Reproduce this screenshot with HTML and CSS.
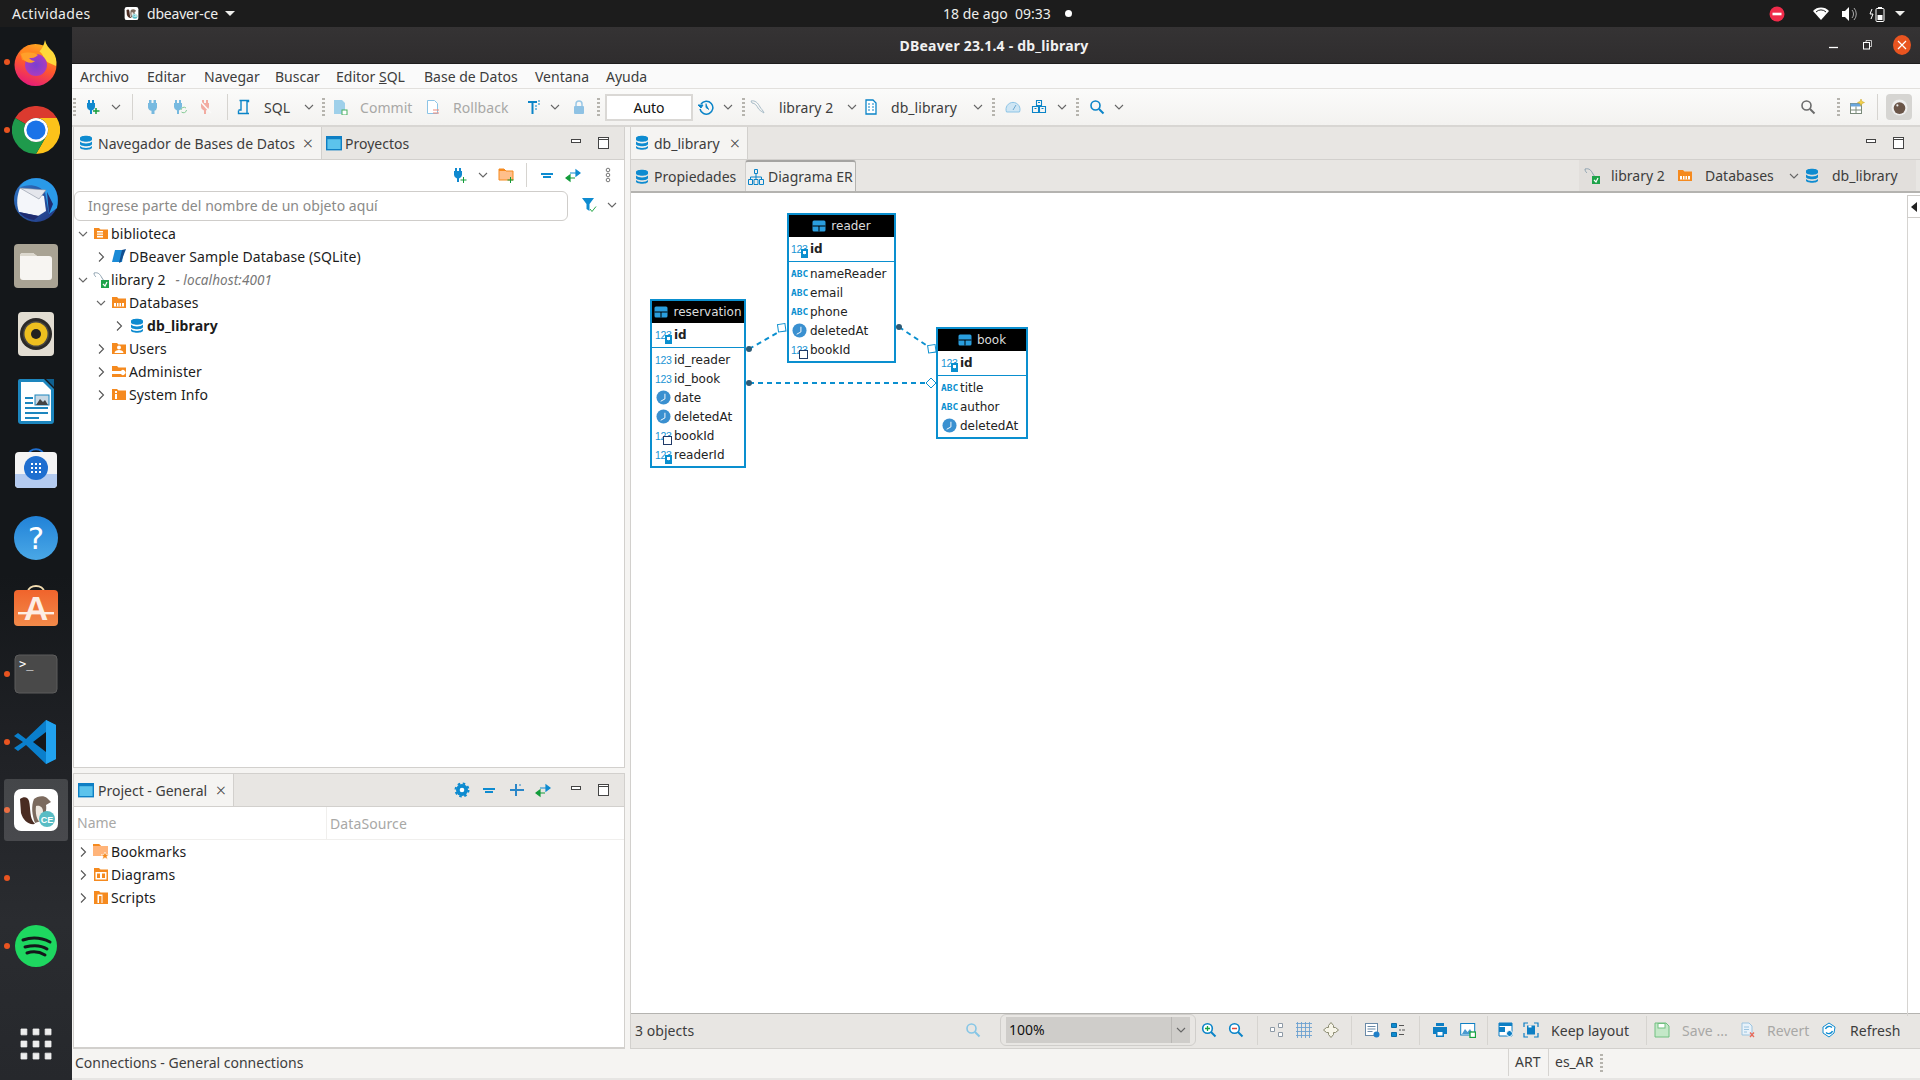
FILE: index.html
```html
<!DOCTYPE html>
<html lang="es">
<head>
<meta charset="utf-8">
<title>DBeaver 23.1.4 - db_library</title>
<link rel="stylesheet" href="styles.css">
</head>
<body>
<svg class="sprite" xmlns="http://www.w3.org/2000/svg">
<defs>
<linearGradient id="ffg" x1="0.7" y1="0" x2="0.3" y2="1"><stop offset="0" stop-color="#ffb01e"/><stop offset=".5" stop-color="#ff5a2c"/><stop offset="1" stop-color="#e5187c"/></linearGradient>
<radialGradient id="ffp"><stop offset="0" stop-color="#7a3fd0"/><stop offset="1" stop-color="#a83cc0"/></radialGradient>
<linearGradient id="tbg" x1="0" y1="0" x2="1" y2="1"><stop offset="0" stop-color="#2f78c8"/><stop offset="1" stop-color="#22357f"/></linearGradient>
<linearGradient id="hlp" x1="0" y1="0" x2="0" y2="1"><stop offset="0" stop-color="#2182d8"/><stop offset="1" stop-color="#4aa8e6"/></linearGradient>
<linearGradient id="bag" x1="0" y1="0" x2="0" y2="1"><stop offset="0" stop-color="#f0642c"/><stop offset="1" stop-color="#f28a4a"/></linearGradient>

<symbol id="firefox" viewBox="0 0 48 48">
<circle cx="23.500" cy="27" r="21" fill="url(#ffg)"/>
<path d="M33 2c1 5 4 8 8 12 3 4 4 9 3 14l-9-4-8-10c3-3 5-7 6-12z" fill="#ffd83a"/>
<path d="M8 15c3-4 5-6 9-8-1 3 0 5 2 7l8-1c4 3 6 8 5 13L10 22z" fill="#ff8a1e"/>
<circle cx="24" cy="27" r="11" fill="url(#ffp)"/>
<path d="M9 16c5-2 12-2 17 1-3 3-6 3-9 3 2 2 3 3 6 3-3 3-9 2-12-2z" fill="#ffa02a"/>
</symbol>
<symbol id="chrome" viewBox="0 0 48 48">
<path d="M3.200 12A24 24 0 0 1 44.800 12H24A12 12 0 0 0 13.600 18Z" fill="#db3a2f"/>
<path d="M44.800 12A24 24 0 0 1 24 48L34.400 30A12 12 0 0 0 24 12Z" fill="#fcc21a"/>
<path d="M3.200 12A24 24 0 0 0 24 48L34.400 30A12 12 0 0 1 13.600 18Z" fill="#1f9a4c"/>
<circle cx="24" cy="24" r="12" fill="#fff"/><circle cx="24" cy="24" r="9.600" fill="#1a73e8"/>
</symbol>
<symbol id="thunderbird" viewBox="0 0 48 48">
<circle cx="24" cy="26" r="22" fill="url(#tbg)"/>
<path d="M7 14C13 3 29 1 39 10c6 5 8 14 6 24l-8 6-4-22C27 11 16 9 7 14z" fill="#2a9ae8"/>
<path d="M8 14l24 8 2 15-8 5-19-4C4 30 5 22 8 14z" fill="#f4f6fa"/>
<path d="M8 14l26 2-7 9z" fill="#e4e6ec" stroke="#8890a0" stroke-width=".6"/>
<path d="M35 18l6 12-4 10zM7 38l20 4-5 4c-7-1-12-4-15-8z" fill="#1f2c70"/>
</symbol>
<symbol id="files" viewBox="0 0 48 48">
<rect x="2" y="2" width="44" height="44" rx="4" fill="#a9a394"/>
<path d="M8 14a3 3 0 0 1 3-3h10l4 3h12a3 3 0 0 1 3 3v18a3 3 0 0 1-3 3H11a3 3 0 0 1-3-3z" fill="#f7f5f2"/>
<path d="M8 14a3 3 0 0 1 3-3h10l4 3z" fill="#dcd8ce"/>
</symbol>
<symbol id="rhythmbox" viewBox="0 0 48 48">
<rect x="6" y="2" width="36" height="44" rx="4" fill="#e2ddd2"/>
<circle cx="24" cy="24" r="16" fill="#2c2a28"/><circle cx="24" cy="24" r="13" fill="#4a4844"/>
<circle cx="24" cy="24" r="11.500" fill="#eebf1f"/><circle cx="24" cy="24" r="5" fill="#242220"/>
</symbol>
<symbol id="writer" viewBox="0 0 48 48">
<path d="M8 1h24l10 10v32a3 3 0 0 1-3 3H9a3 3 0 0 1-3-3V3a2 2 0 0 1 2-2z" fill="#1d86be"/>
<path d="M9 4h22l8 8v31H9z" fill="#fff"/>
<path d="M34 1l8 0v8z" fill="#0f5f8e"/>
<path d="M13 19h8v2h-8zm0 5h8v2h-8zm0 5h23v2H13zm0 5h23v2H13zm0 5h14v2H13z" fill="#1d86be"/>
<rect x="23" y="17" width="14" height="10" fill="#c8d8e4" stroke="#1d86be"/><path d="M24 27l4-6 3 3 2-2 3 5z" fill="#444"/>
</symbol>
<symbol id="software" viewBox="0 0 48 48">
<path d="M16 10c0-9 16-9 16 0" fill="none" stroke="#1f6fd0" stroke-width="2"/>
<rect x="3" y="6" width="42" height="36" rx="4" fill="#f4f4f4"/>
<path d="M3 28h42v10a4 4 0 0 1-4 4H7a4 4 0 0 1-4-4z" fill="#b4cbf0"/>
<circle cx="24" cy="22" r="12" fill="#1f6fd0"/>
<path d="M19 17h2v2h-2zm4 0h2v2h-2zm4 0h2v2h-2zm-8 4h2v2h-2zm4 0h2v2h-2zm4 0h2v2h-2zm-8 4h2v2h-2zm4 0h2v2h-2zm4 0h2v2h-2z" fill="#fff"/>
</symbol>
<symbol id="help" viewBox="0 0 48 48">
<ellipse cx="24" cy="24" rx="22" ry="22" fill="url(#hlp)"/>
<text x="24" y="35" font-family="DejaVu Sans" font-size="31" text-anchor="middle" fill="#fff">?</text>
</symbol>
<symbol id="store" viewBox="0 0 48 48">
<path d="M16 10c0-8 16-8 16 0" fill="none" stroke="#f2dcb0" stroke-width="2"/>
<rect x="2" y="8" width="44" height="36" rx="4" fill="url(#bag)"/>
<text x="24" y="38" font-family="Liberation Sans" font-weight="700" font-size="34" text-anchor="middle" fill="#fdeee4">A</text>
<rect x="6" y="30" width="36" height="2.400" fill="#fdeee4"/>
</symbol>
<symbol id="terminal" viewBox="0 0 48 48">
<rect x="3" y="5" width="42" height="38" rx="4" fill="#494949" stroke="#5c5c5c"/>
<text x="7" y="18" font-family="DejaVu Sans Mono" font-size="12" fill="#fff">&gt;_</text>
</symbol>
<symbol id="vscode" viewBox="0 0 48 48">
<path d="M34 2l10 5v34l-10 5L14 27l-8 6-4-3 9-6-9-6 4-3 8 6z" fill="#0a7fcc"/>
<path d="M34 2l10 5v34l-10 5z" fill="#21a2ef"/>
<path d="M34 14L21 24l13 10z" fill="#15171a"/>
</symbol>
<symbol id="beaver" viewBox="0 0 48 48">
<rect x="2" y="3" width="44" height="42" rx="7" fill="#fff"/>
<path d="M8 13c4-3 8-2 9 2 2 8 0 17 6 23-7 1-12-4-14-11z" fill="#4a2c22"/>
<path d="M22 13c3-3 10-4 13-1l4 4-5 3c1 5-1 9-2 15l-9 3c-3-8-4-17-1-24z" fill="#7b6a5e"/>
<path d="M24 20c4-1 7 1 7 6 0 4-1 8-3 10-3-1-5-9-4-16z" fill="#eee8e0"/>
<circle cx="35" cy="33" r="8" fill="#58bcc4"/>
<text x="35" y="36.500" font-family="Liberation Sans" font-weight="700" font-size="9" text-anchor="middle" fill="#fff">CE</text>
</symbol>
<symbol id="spotify" viewBox="0 0 48 48">
<circle cx="24" cy="24" r="21" fill="#1ed760"/>
<path d="M11 18c9-3 19-2 27 2M13 25c8-2 16-2 22 2M15 31c6-2 13-1 18 2" fill="none" stroke="#14171a" stroke-width="3" stroke-linecap="round"/>
</symbol>
<symbol id="apps" viewBox="0 0 48 48">
<path d="M6 6h7v7H6zm14.500 0h7v7h-7zM35 6h7v7h-7zM6 20.500h7v7H6zm14.500 0h7v7h-7zm14.500 0h7v7h-7zM6 35h7v7H6zm14.500 0h7v7h-7zM35 35h7v7h-7z" fill="#eee" stroke="#eee" stroke-linejoin="round"/>
</symbol>

<symbol id="plug" viewBox="0 0 16 16"><path d="M4 1h2.500v3h2V1H11v3h1v4.500a4 4 0 0 1-2.500 3.300V15h-3v-3.200A4 4 0 0 1 3 8.500V4h1z" fill="#1089cf"/></symbol>
<symbol id="plugadd" viewBox="0 0 16 16"><path d="M3 1h2v3h2V1h2v3h1v4a4 4 0 0 1-3 3.500V15H5v-3.500A4 4 0 0 1 2 8V4h1z" fill="#1089cf"/><path d="M11 9v6M8 12h6.500" stroke="#139c3b" stroke-width="1.500"/></symbol>
<symbol id="plugre" viewBox="0 0 16 16"><path d="M3 1h2v3h2V1h2v3h1v4a4 4 0 0 1-3 3.500V15H5v-3.500A4 4 0 0 1 2 8V4h1z" fill="#1089cf"/><path d="M9 11a3 3 0 0 1 5-2M14.500 11a3 3 0 0 1-5 2" stroke="#2aa84a" fill="none"/></symbol>
<symbol id="plugx" viewBox="0 0 16 16"><path d="M4 1h2v3h2V1h2v3h1v4a4 4 0 0 1-3 3.500V15H6v-3.500A4 4 0 0 1 3 8V4h1z" fill="#ef6f5e"/><path d="M2 2l11 12" stroke="#fff" stroke-width="1.500"/></symbol>
<symbol id="sql" viewBox="0 0 16 16"><path d="M3.500 1.500h9v1h-1.500v12H2.500v-3M5 2v9H2.500M11 14.500h2" fill="none" stroke="#0a84c8" stroke-width="1.400"/></symbol>
<symbol id="commit" viewBox="0 0 16 16"><path d="M2 1h8l3 3v11H2z" fill="#9fd0ea"/><rect x="10" y="11" width="5" height="5" fill="#fff" stroke="#48b060"/></symbol>
<symbol id="rollback" viewBox="0 0 16 16"><path d="M2.500 1.500h7l3 3v10h-10z" fill="#fff" stroke="#8cc4e6"/><path d="M8 11h6M8 14h6" stroke="#f08a7a"/></symbol>
<symbol id="txmode" viewBox="0 0 16 16"><path d="M2 2h9v2H7.500v11h-2V4H2z" fill="#0a84c8"/><path d="M12 2h2M12 5h2M9 7h2M9 10h2" stroke="#0a84c8"/></symbol>
<symbol id="lock" viewBox="0 0 16 16"><path d="M5 7V5a3 3 0 0 1 6 0v2" fill="none" stroke="#9ac8e6" stroke-width="1.500"/><rect x="3" y="7" width="10" height="8" rx="1" fill="#8fc2e4"/></symbol>
<symbol id="history" viewBox="0 0 16 16"><path d="M3 5a6.500 6.500 0 1 1-1 5" fill="none" stroke="#0a84c8" stroke-width="1.500"/><path d="M0 6h5L3 9zM8 4.500V8.500l3 2" fill="#0a84c8" stroke="#0a84c8"/></symbol>
<symbol id="mysql" viewBox="0 0 16 16"><path d="M1 2c4-1 7 2 9 6 1 2 3 3 4 6-3-2-5-3-6-5S5 4 2 4z" fill="none" stroke="#a8bcc8"/></symbol>
<symbol id="mysqlok" viewBox="0 0 16 16"><path d="M1 1c4-1 6 1 8 5l2 3" fill="none" stroke="#8ea2b0"/><path d="M1 1c0 2 1 3 2 4" fill="none" stroke="#8ea2b0"/><rect x="8" y="8" width="8" height="8" fill="#1ea34a"/><path d="M10 12l2 2 2-4" fill="none" stroke="#fff" stroke-width="1.200"/></symbol>
<symbol id="dbdoc" viewBox="0 0 16 16"><path d="M3 1h7l3 3v11H3z" fill="#fff" stroke="#0a84c8" stroke-width="1.300"/><path d="M5 5h2M9 5h2M5 8h2M9 8h2M5 11h2M9 11h2" stroke="#0a84c8"/></symbol>
<symbol id="gauge" viewBox="0 0 16 16"><path d="M1.500 13a7 7 0 1 1 13 0z" fill="#cfe6f4" stroke="#8cc4e6"/><path d="M8 11l3-5" stroke="#6ca8d0"/></symbol>
<symbol id="boxes" viewBox="0 0 16 16"><path d="M5.500 1.500h5v5h-5zM1.500 7.500h6v6h-6zM8.500 7.500h6v6h-6zM7 3.500h2M3.500 9.500h2M10.500 9.500h2" fill="none" stroke="#0a84c8" stroke-width="1.100"/></symbol>
<symbol id="search" viewBox="0 0 16 16"><circle cx="6.500" cy="6.500" r="4.500" fill="none" stroke="#0a84c8" stroke-width="1.600"/><path d="M10 10l4.500 4.500" stroke="#0a84c8" stroke-width="2"/></symbol>
<symbol id="searchg" viewBox="0 0 16 16"><circle cx="6.500" cy="6.500" r="4.500" fill="none" stroke="#6b6b6b" stroke-width="1.600"/><path d="M10 10l4.500 4.500" stroke="#6b6b6b" stroke-width="2"/></symbol>
<symbol id="searchl" viewBox="0 0 16 16"><circle cx="6.500" cy="6.500" r="4.500" fill="none" stroke="#86c6e6" stroke-width="1.600"/><path d="M10 10l4.500 4.500" stroke="#86c6e6" stroke-width="2"/></symbol>
<symbol id="zoomin" viewBox="0 0 16 16"><circle cx="6.500" cy="6.500" r="4.800" fill="#fff" stroke="#0a84c8" stroke-width="1.600"/><path d="M10 10l4.500 4.500" stroke="#0a84c8" stroke-width="2"/><path d="M4 6.500h5M6.500 4v5" stroke="#16a340" stroke-width="1.300"/></symbol>
<symbol id="zoomout" viewBox="0 0 16 16"><circle cx="6.500" cy="6.500" r="4.800" fill="#fff" stroke="#0a84c8" stroke-width="1.600"/><path d="M10 10l4.500 4.500" stroke="#0a84c8" stroke-width="2"/><path d="M4 6.500h5" stroke="#e0483a" stroke-width="1.500"/></symbol>
<symbol id="newtable" viewBox="0 0 16 16"><rect x="1.500" y="4.500" width="11" height="10" fill="#fff" stroke="#7a8a7a"/><path d="M1.500 7.500h11v-3h-11z" fill="#6aa6dc"/><path d="M7 7.500v7M1.500 11h11" stroke="#7a8a7a"/><path d="M12 0l1 2.500 2.500 1-2.500 1L12 7l-1-2.500-2.500-1 2.500-1z" fill="#f4d24a" stroke="#c8a020" stroke-width=".5"/></symbol>
<symbol id="min" viewBox="0 0 14 14"><rect x="1.500" y="3.500" width="9" height="3" fill="#fff" stroke="#444"/></symbol>
<symbol id="max" viewBox="0 0 14 14"><rect x="1.500" y="1.500" width="10" height="11" fill="#fff" stroke="#444"/><path d="M1.500 3.500h10" stroke="#444"/></symbol>
<symbol id="db" viewBox="0 0 16 16"><path d="M2 3c0-3 12-3 12 0v1.500c0 3-12 3-12 0zM2 6.500c2 2.500 10 2.500 12 0V9c0 3-12 3-12 0zM2 11c2 2.500 10 2.500 12 0v1.500c0 3-12 3-12 0z" fill="#0e8bd0"/></symbol>
<symbol id="proj" viewBox="0 0 16 16"><rect x=".7" y="1.700" width="14.600" height="13" fill="#5cc3ec" stroke="#0e7fc4" stroke-width="1.400"/><rect x=".7" y="1.700" width="14.600" height="2.500" fill="#0e7fc4"/></symbol>
<symbol id="er" viewBox="0 0 16 16"><path d="M6.500.5h3v4h-3zM.5 10.500h4v5h-4zM6 10.500h4v5H6zM11.500 10.500h4v5h-4zM8 4.500V8M2.500 10.500V8h11v2.500M8 8v2.500" fill="none" stroke="#0a84c8"/></symbol>
<symbol id="plugplus" viewBox="0 0 16 16"><path d="M3 1h2v3h2V1h2v3h1v4a4 4 0 0 1-3 3.500V15H5v-3.500A4 4 0 0 1 2 8V4h1z" fill="#1089cf"/><path d="M11.500 10v6M8.500 13h6" stroke="#139c3b"/></symbol>
<symbol id="folderadd" viewBox="0 0 16 16"><path d="M1 2h5l2 2h7v9H1z" fill="#ffbf8a" stroke="#f58a1f"/><path d="M1 2h5l2 2H1z" fill="#f58a1f"/><path d="M12.500 10v6M9.500 13h6" stroke="#139c3b"/></symbol>
<symbol id="collapse" viewBox="0 0 16 16"><path d="M2 7h12M4 10h8" stroke="#0e8bd0" stroke-width="1.800"/></symbol>
<symbol id="expand" viewBox="0 0 16 16"><path d="M1 8h14M7 2v12" stroke="#2a86c8" stroke-width="2"/><path d="M10 3h2" stroke="#2a86c8"/></symbol>
<symbol id="link" viewBox="0 0 16 16"><path d="M5 6h10M15 6l-4-3v6z" stroke="#0e8bd0" fill="#0e8bd0" stroke-width="1.200"/><path d="M1 11h9M1 11l4-3v6z" stroke="#139c3b" fill="#139c3b" stroke-width="1.200"/></symbol>
<symbol id="gear" viewBox="0 0 16 16"><circle cx="8" cy="8" r="6" fill="#0e8bd0"/><circle cx="8" cy="8" r="2.300" fill="#fff"/><circle cx="8" cy="8" r="6.500" fill="none" stroke="#0e8bd0" stroke-width="2" stroke-dasharray="2.500 2.600"/></symbol>
<symbol id="dots" viewBox="0 0 16 16"><circle cx="8" cy="3" r="1.800" fill="#fff" stroke="#777"/><circle cx="8" cy="8" r="1.800" fill="#fff" stroke="#777"/><circle cx="8" cy="13" r="1.800" fill="#fff" stroke="#777"/></symbol>
<symbol id="filter" viewBox="0 0 16 16"><path d="M1 1h12L8.500 7v7l-3-2V7z" fill="#0e8bd0"/><path d="M9 12l2 2.500 4-5" fill="none" stroke="#2aa84a"/></symbol>
<symbol id="f-conn" viewBox="0 0 16 16"><path d="M1 2h5l1.500 1.500H15V13H1z" fill="#f58a1f"/><rect x="4" y="5" width="6" height="6.500" fill="#fff"/><path d="M4 7h6M4 9.300h6" stroke="#f58a1f"/></symbol>
<symbol id="f-sample" viewBox="0 0 16 16"><path d="M4 1h9L11 13H1z" fill="#1a8ad6"/><path d="M11 1l4-1-5 13-2 1z" fill="#124f90"/></symbol>
<symbol id="f-dbs" viewBox="0 0 16 16"><path d="M1 2h5l1.500 1.500H15V13H1z" fill="#f58a1f"/><path d="M3 6h10v5.500H3z" fill="#fff"/><path d="M3 6h10v1.500H3zM5.500 7v4.500M8 7v4.500M10.500 7v4.500" fill="#f58a1f" stroke="#f58a1f"/></symbol>
<symbol id="f-users" viewBox="0 0 16 16"><path d="M1 2h5l1.500 1.500H15V13H1z" fill="#f58a1f"/><circle cx="8" cy="6.500" r="2" fill="#fff"/><path d="M3.500 12c0-4 9-4 9 0z" fill="#fff"/></symbol>
<symbol id="f-admin" viewBox="0 0 16 16"><path d="M1 2h5l1.500 1.500H15V13H1z" fill="#f58a1f"/><path d="M1 7h9a2.500 2.500 0 1 1 0 3H1z" fill="#fff"/></symbol>
<symbol id="f-info" viewBox="0 0 16 16"><path d="M1 2h5l1.500 1.500H15V13H1z" fill="#f58a1f"/><path d="M4 4h2v2H4zm0 3h2v5H4z" fill="#fff"/></symbol>
<symbol id="f-book" viewBox="0 0 16 16"><path d="M0 0h6l2 2h7v10H0z" fill="#ffb47a"/><path d="M0 0h6l2 2H0z" fill="#f58a1f"/><path d="M12 8l1.200 2.600H16l-2.200 1.800.8 3-2.600-1.700-2.600 1.700.8-3L8 10.600h2.800z" fill="#f58a1f" stroke="#fff" stroke-width=".6"/></symbol>
<symbol id="f-diag" viewBox="0 0 16 16"><path d="M1 1h5l1.500 1.500H15V14H1z" fill="#f58a1f"/><path d="M2.500 5h11v7.500h-11z" fill="#fff"/><path d="M4 6.500h3v4.500H4zM9 6.500h3v4.500H9z" fill="#f58a1f"/></symbol>
<symbol id="f-script" viewBox="0 0 16 16"><path d="M1 1h5l1.500 1.500H15V14H1z" fill="#f58a1f"/><path d="M4.500 4.500h5V13h-5z" fill="#fff"/><path d="M6 6h2.500v7H6z" fill="#f58a1f"/></symbol>
<symbol id="t-layout" viewBox="0 0 16 16"><path d="M1.500 5.500h4v4h-4zM9.500 1.500h4v4h-4zM9.500 10.500h4v4h-4z" fill="#fff" stroke="#8e9aa6"/></symbol>
<symbol id="t-grid" viewBox="0 0 16 16"><path d="M1.500 0v16M5.500 0v16M9.500 0v16M13.500 0v16M0 1.500h16M0 5.500h16M0 9.500h16M0 13.500h16" stroke="#6ca0d0" stroke-width=".9"/></symbol>
<symbol id="t-move" viewBox="0 0 16 16"><path d="M8 .5l2.500 3v2h2l3 2.500-3 2.500h-2v2L8 15.500l-2.500-3v-2h-2L.5 8l3-2.500h2v-2z" fill="#f6f4e8" stroke="#8a8a70"/></symbol>
<symbol id="t-note" viewBox="0 0 16 16"><rect x="1.500" y="1.500" width="12" height="12" fill="#fff" stroke="#6a8aa8"/><path d="M3.500 4.500h8M3.500 7h8M3.500 9.500h5" stroke="#6a8aa8"/><circle cx="12.500" cy="12.500" r="3" fill="#1f7fc8"/></symbol>
<symbol id="t-tree" viewBox="0 0 16 16"><path d="M1.500 1.500h5v4h-5zM1.500 10.500h5v4h-5z" fill="#0e8bd0" stroke="#0e6ea8"/><path d="M9 3.500h5M9 8h2M12 8h3M9 12.500h5" stroke="#555"/></symbol>
<symbol id="t-print" viewBox="0 0 16 16"><path d="M4 1h8v3H4zM1 5h14v7h-3v3H4v-3H1z" fill="#0e7fc4"/><path d="M5.500 10h5v3.500h-5z" fill="#fff"/></symbol>
<symbol id="t-img" viewBox="0 0 16 16"><rect x=".7" y="1.500" width="14" height="11.500" fill="#fff" stroke="#0e7fc4"/><path d="M2 12l3-5 2.500 3L10 7l3 5z" fill="#4a9ad0"/><rect x="10" y="10" width="5.500" height="5.500" fill="#fff" stroke="#16a340" stroke-width="1.300"/></symbol>
<symbol id="t-cfg" viewBox="0 0 16 16"><path d="M1 1h13v13H1z" fill="#fff" stroke="#0e7fc4"/><path d="M1 1h13v3H1zM1 5h6v5H1z" fill="#0e7fc4"/><circle cx="11.500" cy="11.500" r="3" fill="#0e7fc4" stroke="#fff"/></symbol>
<symbol id="t-fit" viewBox="0 0 16 16"><path d="M1 5V1h4M11 1h4v4M15 11v4h-4M5 15H1v-4" fill="none" stroke="#0e7fc4" stroke-width="1.200"/><rect x="4" y="3.500" width="8" height="9" fill="#0e7fc4"/><rect x="5.500" y="3.500" width="3" height="2" fill="#fff"/></symbol>
<symbol id="t-save" viewBox="0 0 16 16"><path d="M1 1h11l3 3v11H1z" fill="#c4e8c8" stroke="#70c080"/><rect x="4" y="1.500" width="7" height="4.500" fill="#fff" stroke="#70c080"/></symbol>
<symbol id="t-revert" viewBox="0 0 16 16"><path d="M2 1h7l3 3v9H2z" fill="#e8f2fa" stroke="#9cc4e0"/><path d="M4 5h5M4 7.500h5M4 10h3" stroke="#9cc4e0"/><path d="M10 10.500l4 4.500M14 10.500l-4 4.500" stroke="#e86a5a" stroke-width="1.300"/></symbol>
<symbol id="t-refresh" viewBox="0 0 16 16"><path d="M8 1L14 5l-1 6-5 4-6-4V5z" fill="#fff" stroke="#0e8bd0"/><path d="M4.500 7a4 4 0 0 1 6.500-1.500M11.500 9a4 4 0 0 1-6.500 1.500" fill="none" stroke="#0e8bd0" stroke-width="1.400"/></symbol>
<symbol id="chev-d" viewBox="0 0 12 12"><path d="M2 4l4 4 4-4" fill="none" stroke="#666" stroke-width="1.100"/></symbol>
<symbol id="chev-r" viewBox="0 0 12 12"><path d="M4 1.500L8.500 6 4 10.500" fill="none" stroke="#555" stroke-width="1.100"/></symbol>
<symbol id="erhead" viewBox="0 0 14 12"><rect x=".5" y=".5" width="13" height="11" rx="1.500" fill="#2a9ede"/><path d="M.5 6h13M7 6v5.500" stroke="#000"/></symbol>
<symbol id="clock" viewBox="0 0 16 16"><circle cx="8" cy="8" r="7.500" fill="#3a90d0"/><path d="M9.500 4v5.500L5 12" fill="none" stroke="#fff"/></symbol>
</defs>
</svg>

<div class="screen">
  <header class="topbar">
    <span class="top-act">Actividades</span>
    <svg class="top-appicon" viewBox="0 0 48 48"><use href="#beaver"/></svg>
    <span class="top-app">dbeaver-ce</span>
    <span class="tri"></span>
    <div class="top-clock"><span>18 de ago&nbsp; 09:33</span><i class="top-dot"></i></div>
    <div class="top-tray">
      <svg class="tray-ic" viewBox="0 0 16 16"><circle cx="8" cy="8" r="7.500" fill="#ef2b4a"/><rect x="3.500" y="6.700" width="9" height="2.600" fill="#fff"/></svg>
      <svg class="tray-ic tray-wifi" viewBox="0 0 16 16"><path d="M0 5a11 11 0 0 1 16 0L8 14z" fill="#fff"/><path d="M3 6a7 7 0 0 1 10 0" stroke="#1c1c1c" fill="none"/></svg>
      <svg class="tray-ic tray-next" viewBox="0 0 16 16"><path d="M1 5h3l4-4v14l-4-4H1z" fill="#fff"/><path d="M11 4a6 6 0 0 1 0 8M13 2a9 9 0 0 1 0 12" stroke="#aaa" fill="none"/></svg>
      <svg class="tray-ic tray-next" viewBox="0 0 16 16"><rect x="7" y="2.500" width="8" height="13" rx="1" fill="none" stroke="#fff"/><rect x="9" y="1" width="4" height="1.500" fill="#fff"/><rect x="8.500" y="9" width="5" height="5" fill="#fff"/><path d="M3 3L1 8h3l-2 5" fill="none" stroke="#fff"/></svg>
      <span class="tri tray-tri"></span>
    </div>
  </header>

  <div class="desk">
    <nav class="dock">
      <div class="dock-item run"><svg class="dock-ic" viewBox="0 0 48 48"><use href="#firefox"/></svg></div>
      <div class="dock-item run"><svg class="dock-ic" viewBox="0 0 48 48"><use href="#chrome"/></svg></div>
      <div class="dock-item"><svg class="dock-ic" viewBox="0 0 48 48"><use href="#thunderbird"/></svg></div>
      <div class="dock-item"><svg class="dock-ic" viewBox="0 0 48 48"><use href="#files"/></svg></div>
      <div class="dock-item"><svg class="dock-ic" viewBox="0 0 48 48"><use href="#rhythmbox"/></svg></div>
      <div class="dock-item"><svg class="dock-ic" viewBox="0 0 48 48"><use href="#writer"/></svg></div>
      <div class="dock-item"><svg class="dock-ic" viewBox="0 0 48 48"><use href="#software"/></svg></div>
      <div class="dock-item"><svg class="dock-ic" viewBox="0 0 48 48"><use href="#help"/></svg></div>
      <div class="dock-item"><svg class="dock-ic" viewBox="0 0 48 48"><use href="#store"/></svg></div>
      <div class="dock-item run"><svg class="dock-ic" viewBox="0 0 48 48"><use href="#terminal"/></svg></div>
      <div class="dock-item run"><svg class="dock-ic" viewBox="0 0 48 48"><use href="#vscode"/></svg></div>
      <div class="dock-item run active"><svg class="dock-ic" viewBox="0 0 48 48"><use href="#beaver"/></svg></div>
      <div class="dock-item run"></div>
      <div class="dock-item run"><svg class="dock-ic" viewBox="0 0 48 48"><use href="#spotify"/></svg></div>
      <div class="dock-apps"><svg class="dock-appsic" viewBox="0 0 48 48"><use href="#apps"/></svg></div>
    </nav>

    <main class="window">
      <div class="titlebar">
        <span class="title">DBeaver 23.1.4 - db_library</span>
        <div class="wincontrols">
          <svg class="wc" viewBox="0 0 12 12"><path d="M1 8.500h9" stroke="#fff" stroke-width="1.300"/></svg>
          <svg class="wc wc-gap" viewBox="0 0 12 12"><rect x="2.500" y="3.500" width="6" height="6.500" fill="none" stroke="#fff"/><path d="M5 3.500V1.500h5.500v6H9" fill="none" stroke="#fff" stroke-width=".7"/></svg>
          <span class="wc-close"><svg viewBox="0 0 12 12" class="wc-x"><path d="M2 2l8 8M10 2l-8 8" stroke="#fff" stroke-width="1.200"/></svg></span>
        </div>
      </div>

      <div class="menubar">
        <span class="mi mi1">Archivo</span><span class="mi mi2">Editar</span><span class="mi mi3">Navegar</span><span class="mi mi4">Buscar</span><span class="mi mi5">Editor <u>S</u>QL</span><span class="mi mi6">Base de Datos</span><span class="mi mi7">Ventana</span><span class="mi mi8">Ayuda</span>
      </div>

      <div class="toolbar">
        <i class="handle"></i>
        <svg class="ic m8"><use href="#plugadd"/></svg>
        <svg class="cv m8"><use href="#chev-d"/></svg>
        <i class="tsep m10"></i>
        <svg class="ic m11 dim"><use href="#plug"/></svg>
        <svg class="ic m9 dim"><use href="#plugre"/></svg>
        <svg class="ic m8 dim"><use href="#plugx"/></svg>
        <i class="tsep m12"></i>
        <svg class="ic m7"><use href="#sql"/></svg>
        <span class="tx m11 w27">SQL</span>
        <svg class="cv m12"><use href="#chev-d"/></svg>
        <i class="handle m7"></i>
        <svg class="ic m6"><use href="#commit"/></svg>
        <span class="tx off m11 w54">Commit</span>
        <svg class="ic m10"><use href="#rollback"/></svg>
        <span class="tx off m11 w57">Rollback</span>
        <svg class="ic m15"><use href="#txmode"/></svg>
        <svg class="cv m6"><use href="#chev-d"/></svg>
        <svg class="ic m9"><use href="#lock"/></svg>
        <i class="handle m9"></i>
        <span class="autobox m5">Auto</span>
        <svg class="ic m4"><use href="#history"/></svg>
        <svg class="cv m7"><use href="#chev-d"/></svg>
        <i class="handle m8"></i>
        <svg class="ic m4"><use href="#mysql"/></svg>
        <span class="tx m12 w55">library 2</span>
        <svg class="cv m12"><use href="#chev-d"/></svg>
        <svg class="ic m4"><use href="#dbdoc"/></svg>
        <span class="tx m11 w69">db_library</span>
        <svg class="cv m12"><use href="#chev-d"/></svg>
        <i class="handle m8"></i>
        <svg class="ic m9"><use href="#gauge"/></svg>
        <svg class="ic m8"><use href="#boxes"/></svg>
        <svg class="cv m8"><use href="#chev-d"/></svg>
        <i class="handle m8"></i>
        <svg class="ic m9"><use href="#search"/></svg>
        <svg class="cv m7"><use href="#chev-d"/></svg>
        <div class="toolbar-end">
          <svg class="ic"><use href="#searchg"/></svg>
          <i class="handle m20"></i>
          <svg class="ic m8"><use href="#newtable"/></svg>
          <i class="tsep m11"></i>
          <span class="persp m8"><svg viewBox="0 0 16 16" class="persp-ic"><circle cx="8" cy="8" r="7.500" fill="#eee"/><circle cx="8" cy="8.500" r="5.500" fill="#6a5548"/><circle cx="6" cy="6" r="1" fill="#eee"/></svg></span>
        </div>
      </div>

      <div class="workspace">
        <div class="leftcol">
          <section class="pane pane-nav">
            <div class="tabbar">
              <div class="tab tab-nav"><svg class="ic"><use href="#db"/></svg><span class="tabtxt">Navegador de Bases de Datos</span><span class="x">×</span></div>
              <div class="tab tab-plain"><svg class="ic"><use href="#proj"/></svg><span class="tabtxt">Proyectos</span></div>
              <div class="pane-btns"><svg class="mm" viewBox="0 0 14 14"><use href="#min"/></svg><svg class="mm" viewBox="0 0 14 14"><use href="#max"/></svg></div>
            </div>
            <div class="nav-tools">
              <svg class="ic"><use href="#plugplus"/></svg>
              <svg class="cv m8"><use href="#chev-d"/></svg>
              <svg class="ic m8"><use href="#folderadd"/></svg>
              <i class="tsep m11"></i>
              <svg class="ic m11"><use href="#collapse"/></svg>
              <svg class="ic m8"><use href="#link"/></svg>
              <svg class="ic m17"><use href="#dots"/></svg>
            </div>
            <div class="searchrow">
              <div class="searchbox">Ingrese parte del nombre de un objeto aquí</div>
              <svg class="ic m12"><use href="#filter"/></svg>
              <svg class="cv m8"><use href="#chev-d"/></svg>
            </div>
            <ul class="tree">
              <li class="node l0"><svg class="tw"><use href="#chev-d"/></svg><svg class="ic"><use href="#f-conn"/></svg><span>biblioteca</span></li>
              <li class="node l1"><svg class="tw"><use href="#chev-r"/></svg><svg class="ic"><use href="#f-sample"/></svg><span>DBeaver Sample Database (SQLite)</span></li>
              <li class="node l0"><svg class="tw"><use href="#chev-d"/></svg><svg class="ic"><use href="#mysqlok"/></svg><span>library 2 <em class="host">- localhost:4001</em></span></li>
              <li class="node l1"><svg class="tw"><use href="#chev-d"/></svg><svg class="ic"><use href="#f-dbs"/></svg><span>Databases</span></li>
              <li class="node l2"><svg class="tw"><use href="#chev-r"/></svg><svg class="ic"><use href="#db"/></svg><b>db_library</b></li>
              <li class="node l1"><svg class="tw"><use href="#chev-r"/></svg><svg class="ic"><use href="#f-users"/></svg><span>Users</span></li>
              <li class="node l1"><svg class="tw"><use href="#chev-r"/></svg><svg class="ic"><use href="#f-admin"/></svg><span>Administer</span></li>
              <li class="node l1"><svg class="tw"><use href="#chev-r"/></svg><svg class="ic"><use href="#f-info"/></svg><span>System Info</span></li>
            </ul>
          </section>

          <section class="pane pane-proj">
            <div class="tabbar">
              <div class="tab tab-proj"><svg class="ic"><use href="#proj"/></svg><span class="tabtxt">Project - General</span><span class="x">×</span></div>
              <div class="pane-btns">
                <svg class="ic"><use href="#gear"/></svg>
                <svg class="ic m9"><use href="#collapse"/></svg>
                <svg class="ic m10"><use href="#expand"/></svg>
                <svg class="ic m8"><use href="#link"/></svg>
                <svg class="mm m18" viewBox="0 0 14 14"><use href="#min"/></svg><svg class="mm" viewBox="0 0 14 14"><use href="#max"/></svg>
              </div>
            </div>
            <div class="colhead"><span class="col-name">Name</span><span class="col-ds">DataSource</span></div>
            <ul class="tree">
              <li class="node l0"><svg class="tw"><use href="#chev-r"/></svg><svg class="ic"><use href="#f-book"/></svg><span>Bookmarks</span></li>
              <li class="node l0"><svg class="tw"><use href="#chev-r"/></svg><svg class="ic"><use href="#f-diag"/></svg><span>Diagrams</span></li>
              <li class="node l0"><svg class="tw"><use href="#chev-r"/></svg><svg class="ic"><use href="#f-script"/></svg><span>Scripts</span></li>
            </ul>
          </section>
        </div>

        <section class="pane pane-editor">
          <div class="tabbar">
            <div class="tab tab-db"><svg class="ic"><use href="#db"/></svg><span class="tabtxt">db_library</span><span class="x">×</span></div>
            <div class="pane-btns"><svg class="mm" viewBox="0 0 14 14"><use href="#min"/></svg><svg class="mm" viewBox="0 0 14 14"><use href="#max"/></svg></div>
          </div>
          <div class="subtabs">
            <div class="subtab"><svg class="ic"><use href="#db"/></svg><span class="tabtxt">Propiedades</span></div>
            <div class="subtab subtab-on"><svg class="ic"><use href="#er"/></svg><span class="tabtxt">Diagrama ER</span></div>
            <div class="crumbs">
              <svg class="ic"><use href="#mysqlok"/></svg><span class="crumb m10 w55">library 2</span>
              <svg class="ic m10"><use href="#f-dbs"/></svg><span class="crumb m11 w70">Databases</span>
              <svg class="cv m13"><use href="#chev-d"/></svg>
              <svg class="ic m3"><use href="#db"/></svg><span class="crumb m11 w69">db_library</span>
            </div>
          </div>

          <div class="canvas">
            <svg class="links" viewBox="0 0 600 300">
              <path d="M118 156L151 137M268 134L298 154M118 190H296" fill="none" stroke="#0a8fcf" stroke-width="2" stroke-dasharray="5 4"/>
              <circle cx="118" cy="156" r="3" fill="#2e5a74"/><circle cx="268" cy="134" r="3" fill="#2e5a74"/><circle cx="118" cy="190" r="3" fill="#2e5a74"/>
              <rect x="147" y="131" width="7.500" height="7.500" fill="#fff" stroke="#0a8fcf" transform="rotate(-8 151 135)"/>
              <rect x="297" y="152" width="7.500" height="7.500" fill="#fff" stroke="#0a8fcf" transform="rotate(-8 301 155)"/>
              <path d="M300 185l5 5-5 5-5-5z" fill="#fff" stroke="#0a8fcf"/>
            </svg>

            <article class="entity e-reader">
              <h3 class="e-head"><svg class="e-hic"><use href="#erhead"/></svg>reader</h3>
              <div class="e-keys"><div class="f"><span class="fi n k">123</span><b>id</b></div></div>
              <div class="e-fields">
                <div class="f"><span class="fi a">ABC</span>nameReader</div>
                <div class="f"><span class="fi a">ABC</span>email</div>
                <div class="f"><span class="fi a">ABC</span>phone</div>
                <div class="f"><svg class="fc"><use href="#clock"/></svg>deletedAt</div>
                <div class="f"><span class="fi n r">123</span>bookId</div>
              </div>
            </article>

            <article class="entity e-res">
              <h3 class="e-head"><svg class="e-hic"><use href="#erhead"/></svg>reservation</h3>
              <div class="e-keys"><div class="f"><span class="fi n k">123</span><b>id</b></div></div>
              <div class="e-fields">
                <div class="f"><span class="fi n">123</span>id_reader</div>
                <div class="f"><span class="fi n">123</span>id_book</div>
                <div class="f"><svg class="fc"><use href="#clock"/></svg>date</div>
                <div class="f"><svg class="fc"><use href="#clock"/></svg>deletedAt</div>
                <div class="f"><span class="fi n r">123</span>bookId</div>
                <div class="f"><span class="fi n k">123</span>readerId</div>
              </div>
            </article>

            <article class="entity e-book">
              <h3 class="e-head"><svg class="e-hic"><use href="#erhead"/></svg>book</h3>
              <div class="e-keys"><div class="f"><span class="fi n k">123</span><b>id</b></div></div>
              <div class="e-fields">
                <div class="f"><span class="fi a">ABC</span>title</div>
                <div class="f"><span class="fi a">ABC</span>author</div>
                <div class="f"><svg class="fc"><use href="#clock"/></svg>deletedAt</div>
              </div>
            </article>

            <div class="sidegrip"><i class="grip-tri"></i></div>
          </div>

          <div class="erbar">
            <span class="tx w333">3 objects</span>
            <svg class="ic"><use href="#searchl"/></svg>
            <div class="zoombox m18"><span class="zoomval">100%</span><span class="zoomarrow"><svg class="cv"><use href="#chev-d"/></svg></span></div>
            <svg class="ic m4"><use href="#zoomin"/></svg>
            <svg class="ic m9"><use href="#zoomout"/></svg>
            <i class="tsep m12"></i>
            <svg class="ic m10"><use href="#t-layout"/></svg>
            <svg class="ic m9"><use href="#t-grid"/></svg>
            <svg class="ic m9"><use href="#t-move"/></svg>
            <i class="tsep m11"></i>
            <svg class="ic m11"><use href="#t-note"/></svg>
            <svg class="ic m8"><use href="#t-tree"/></svg>
            <i class="tsep m12"></i>
            <svg class="ic m11"><use href="#t-print"/></svg>
            <svg class="ic m10"><use href="#t-img"/></svg>
            <i class="tsep m10"></i>
            <svg class="ic m9"><use href="#t-cfg"/></svg>
            <svg class="ic m7"><use href="#t-fit"/></svg>
            <span class="tx m11 w78">Keep layout</span>
            <i class="tsep m17"></i>
            <svg class="ic m6"><use href="#t-save"/></svg>
            <span class="tx off m11 w45">Save ...</span>
            <svg class="ic m12"><use href="#t-revert"/></svg>
            <span class="tx off m10 w43">Revert</span>
            <svg class="ic m10"><use href="#t-refresh"/></svg>
            <span class="tx m12">Refresh</span>
          </div>
        </section>
      </div>

      <footer class="status">
        <span class="st-msg">Connections - General connections</span>
        <span class="st-cell st-art">ART</span>
        <span class="st-cell st-loc">es_AR</span>
        <i class="handle"></i>
      </footer>
    </main>
  </div>
</div>
</body>
</html>
```

FILE: styles.css
```css
* { box-sizing: border-box; }
html, body { margin: 0; padding: 0; }
body {
  width: 1920px;
  height: 1080px;
  overflow: hidden;
  font-family: "Noto Sans", "DejaVu Sans", sans-serif;
  font-size: 14px;
  color: #3d3d3d;
  background: #14171a;
}
.sprite { position: absolute; width: 0; height: 0; }
ul { list-style: none; margin: 0; padding: 0; }
h3 { margin: 0; }
svg { display: block; flex: none; overflow: visible; }

.screen { width: 1920px; height: 1080px; display: flex; flex-direction: column; }

/* ---------- Ubuntu top bar ---------- */
.topbar {
  height: 27px;
  flex: none;
  background: #1c1c1c;
  color: #eeeeec;
  display: flex;
  align-items: center;
  position: relative;
}
.top-act { margin-left: 12px; width: 112px; letter-spacing: .35px; }
.top-appicon { width: 15px; height: 15px; }
.top-app { margin-left: 8px; width: 78px; white-space: nowrap; letter-spacing: -.2px; }
.tri { width: 0; height: 0; border-left: 5px solid transparent; border-right: 5px solid transparent; border-top: 5px solid #eeeeec; }
.top-clock { position: absolute; left: 943px; top: 0; height: 27px; display: flex; align-items: center; gap: 14px; white-space: nowrap; }
.top-dot { width: 7px; height: 7px; border-radius: 50%; background: #fff; }
.top-tray { margin-left: auto; display: flex; align-items: center; padding-right: 15px; }
.tray-ic { width: 16px; height: 16px; }
.tray-wifi { margin-left: 28px; }
.tray-next { margin-left: 12px; }
.tray-tri { margin-left: 10px; }

/* ---------- Dock ---------- */
.desk { flex: 1; display: flex; min-height: 0; }
.dock {
  width: 72px;
  flex: none;
  display: flex;
  flex-direction: column;
  background: linear-gradient(180deg, #14171a 0%, #14171a 52%, #1f2125 68%, #2a2c30 85%, #26282c 100%);
}
.dock-item { height: 68px; flex: none; display: flex; align-items: center; justify-content: center; position: relative; }
.dock-item:first-child { margin-top: 1px; }
.dock-item.run::before { content: ""; position: absolute; left: 4px; top: 31px; width: 6px; height: 6px; border-radius: 50%; background: #e95420; }
.dock-item.active::after { content: ""; position: absolute; left: 4px; right: 4px; top: 3px; bottom: 3px; background: rgba(255,255,255,.16); border-radius: 3px; }
.dock-ic { width: 48px; height: 48px; position: relative; z-index: 1; }
.dock-apps { flex: 1; display: flex; align-items: flex-start; justify-content: center; padding-top: 44px; }
.dock-appsic { width: 40px; height: 40px; }

/* ---------- Window ---------- */
.window { flex: 1; min-width: 0; display: flex; flex-direction: column; background: #f5f4f2; }
.titlebar {
  height: 37px;
  flex: none;
  background: linear-gradient(180deg, #353334, #2f2d2e);
  border-bottom: 1px solid #1e1d1d;
  display: flex;
  align-items: center;
  justify-content: center;
  position: relative;
  padding-right: 4px;
}
.title { font-weight: 700; color: #f1f1f1; font-size: 14px; letter-spacing: .2px; }
.wincontrols { position: absolute; right: 9px; top: 8px; display: flex; align-items: center; }
.wc { width: 12px; height: 12px; }
.wc-gap { margin-left: 21px; margin-right: 20px; }
.wc-close { width: 18px; height: 20px; border-radius: 50%; background: #e95420; display: flex; align-items: center; justify-content: center; }
.wc-x { width: 12px; height: 12px; }

.menubar { height: 25px; flex: none; background: #fafafa; border-bottom: 1px solid #e2e0dd; display: flex; align-items: center; padding-left: 8px; }
.mi { white-space: nowrap; flex: none; }
.mi1 { width: 67px; } .mi2 { width: 57px; } .mi3 { width: 71px; } .mi4 { width: 61px; }
.mi5 { width: 88px; } .mi6 { width: 111px; } .mi7 { width: 71px; } .mi8 { width: 60px; }

/* ---------- Toolbars ---------- */
.toolbar {
  height: 38px;
  flex: none;
  background: linear-gradient(180deg, #fbfbfa, #f3f2f0);
  border-bottom: 2px solid #d8d6d3;
  display: flex;
  align-items: center;
  padding-left: 1px;
}
.toolbar-end { margin-left: auto; display: flex; align-items: center; padding-right: 8px; }
.ic { width: 18px; height: 18px; padding: 1px; }
.cv { width: 12px; height: 12px; }
.dim { opacity: .55; }
.handle { width: 3px; height: 18px; flex: none; background: repeating-linear-gradient(180deg, #b6b4ae 0 2px, transparent 2px 4px); }
.tsep { width: 1px; height: 26px; flex: none; background: #d6d4d0; }
.tx { white-space: nowrap; color: #3d3d3d; flex: none; letter-spacing: .05px; }
.off { color: #a8a8a6; }
.autobox { width: 88px; height: 27px; flex: none; background: #fff; border: 2px solid #dad8d5; text-align: center; line-height: 24px; color: #111; }
.persp { width: 26px; height: 26px; background: #d6d5d2; border-radius: 4px; display: flex; align-items: center; justify-content: center; }
.persp-ic { width: 17px; height: 17px; }

.m3 { margin-left: 3px; } .m4 { margin-left: 4px; } .m5 { margin-left: 5px; } .m6 { margin-left: 6px; }
.m7 { margin-left: 7px; } .m8 { margin-left: 8px; } .m9 { margin-left: 9px; } .m10 { margin-left: 10px; }
.m11 { margin-left: 11px; } .m12 { margin-left: 12px; } .m13 { margin-left: 13px; } .m15 { margin-left: 15px; }
.m17 { margin-left: 17px; } .m18 { margin-left: 18px; } .m20 { margin-left: 20px; }
.w27 { width: 27px; } .w43 { width: 43px; } .w45 { width: 45px; } .w54 { width: 54px; } .w55 { width: 55px; }
.w57 { width: 57px; } .w69 { width: 69px; } .w70 { width: 70px; } .w78 { width: 78px; } .w333 { width: 333px; padding-left: 4px; }

/* ---------- Workspace ---------- */
.workspace { height: 922px; flex: none; display: flex; gap: 5px; padding-left: 1px; }
.leftcol { width: 552px; flex: none; display: flex; flex-direction: column; gap: 5px; }
.pane { display: flex; flex-direction: column; background: #fff; border: 1px solid #d2d0cd; border-top: 0; min-width: 0; }
.pane-nav { height: 641px; flex: none; }
.pane-proj { flex: 1; min-height: 0; border-top: 1px solid #d2d0cd; border-bottom-width: 2px; }
.pane-editor { flex: 1; border-right: 0; }

.tabbar { height: 33px; flex: none; background: #e8e6e3; border-bottom: 1px solid #d2d0cd; display: flex; position: relative; }
.tab { display: flex; align-items: center; height: 32px; flex: none; white-space: nowrap; }
.tabtxt { margin-left: 3px; }
.tab-nav { width: 248px; background: #f5f4f2; padding-left: 3px; border-right: 1px solid #d2d0cd; }
.tab-nav .tabtxt { width: 204px; }
.tab-plain { padding-left: 3px; }
.tab-plain .tabtxt { margin-left: 2px; }
.tab-proj { width: 160px; background: #f5f4f2; padding-left: 3px; border-right: 1px solid #d2d0cd; }
.tab-proj .tabtxt { width: 117px; }
.tab-db { width: 117px; background: #f5f4f2; padding-left: 2px; border-right: 1px solid #d2d0cd; }
.tab-db .tabtxt { width: 75px; }
.x { font-size: 18px; line-height: 18px; color: #444; font-weight: 300; width: 12px; text-align: center; }
.pane-btns { margin-left: auto; display: flex; align-items: center; padding-right: 13px; height: 32px; }
.pane-editor .pane-btns { padding-right: 14px; }
.mm { width: 14px; height: 14px; }
.mm + .mm { margin-left: 13px; }

.nav-tools { height: 30px; flex: none; display: flex; align-items: center; padding-left: 377px; }
.nav-tools .tsep { height: 24px; }
.searchrow { height: 32px; flex: none; display: flex; align-items: flex-start; }
.searchrow .ic { margin-top: 6px; }
.searchrow .cv { margin-top: 9px; }
.searchbox { width: 494px; height: 30px; margin-top: 1px; flex: none; background: #fff; border: 1px solid #cfcdca; border-radius: 6px; color: #8a8a88; line-height: 27px; padding-left: 13px; letter-spacing: .05px; white-space: nowrap; }

.node { height: 23px; display: flex; align-items: center; white-space: nowrap; color: #1c1c1c; }
.node svg.tw { width: 12px; height: 12px; }
.node .ic { margin-left: 3px; }
.node span { margin-left: 1px; letter-spacing: .1px; }
.node b { margin-left: 1px; letter-spacing: .15px; }
.l0 { padding-left: 3px; } .l1 { padding-left: 21px; } .l2 { padding-left: 39px; }
.host { color: #777; font-style: italic; margin-left: 6px; font-size: 13.500px; }

.colhead { height: 33px; flex: none; display: flex; align-items: center; border-bottom: 1px solid #f0efed; color: #a8a8a6; }
.col-name { width: 253px; padding-left: 3px; height: 100%; line-height: 32px; border-right: 1px solid #f0efed; }
.col-ds { padding-left: 3px; letter-spacing: .1px; }

.subtabs { height: 33px; flex: none; background: #e8e6e3; border-bottom: 2px solid #b4b3b0; display: flex; align-items: center; position: relative; }
.subtab { display: flex; align-items: center; height: 31px; white-space: nowrap; padding: 2px 0 0 2px; }
.subtab:first-child { width: 114px; }
.subtab-on { width: 111px; background: #f0efed; border-top: 2px solid #a5a4a2; border-left: 1px solid #cfcdca; border-right: 1px solid #b4b3b0; border-radius: 3px 3px 0 0; padding: 0 0 0 1px; }
.crumbs { margin-left: auto; width: 337px; height: 31px; background: #e2dfdc; display: flex; align-items: center; padding-left: 4px; white-space: nowrap; margin-right: 4px; }
.crumb { flex: none; }

/* ---------- ER canvas ---------- */
.canvas { flex: 1; position: relative; background: #fff; min-height: 0; }
.links { position: absolute; left: 0; top: 0; width: 600px; height: 300px; }
.entity {
  position: absolute;
  background: #fff;
  border: 2px solid #0a8fcf;
  font-family: "DejaVu Sans", sans-serif;
  font-size: 12px;
  color: #222;
}
.e-reader { left: 156px; top: 20px; width: 109px; }
.e-res { left: 19px; top: 106px; width: 96px; }
.e-book { left: 305px; top: 134px; width: 92px; }
.e-res .f, .e-book .f { padding-left: 3px; }
.e-head { height: 22px; background: #000; color: #dcdcdc; font-weight: 400; font-size: 12px; display: flex; align-items: center; justify-content: center; gap: 5px; }
.e-hic { width: 14px; height: 12px; }
.e-keys { height: 25px; border-bottom: 1px solid #0a8fcf; display: flex; align-items: center; }
.e-keys .f { height: 24px; }
.e-fields { padding: 2px 0; }
.f { height: 19px; display: flex; align-items: center; white-space: nowrap; padding-left: 2px; }
.fi { width: 17px; margin-right: 2px; flex: none; color: #1a94d4; position: relative; line-height: 12px; }
.n { font-family: "Liberation Sans", sans-serif; font-size: 10.500px; letter-spacing: -.3px; }
.a { font-family: "DejaVu Sans Mono", monospace; font-size: 9.500px; font-weight: 700; color: #0a8fcf; }
.k::after { content: ""; position: absolute; right: 0; bottom: -3px; width: 7px; height: 9px; background: radial-gradient(circle at 50% 40%, #fff 0 1.500px, #0a8fcf 2px); }
.r::after { content: ""; position: absolute; right: 0; bottom: -3px; width: 7px; height: 7px; background: #fff; border: 1px solid #1f3a68; }
.fc { width: 15px; height: 15px; margin: 0 3px 0 1px; }
.sidegrip { position: absolute; right: 0; top: 2px; width: 13px; height: 23px; border: 1px solid #cfcdca; border-right: 0; background: #fff; display: flex; align-items: center; justify-content: center; }
.sidegrip::after { content: ""; position: absolute; left: -1px; top: 22px; width: 1px; height: 798px; background: #d6d4d1; }
.grip-tri { width: 0; height: 0; border-top: 5px solid transparent; border-bottom: 5px solid transparent; border-right: 6px solid #222; }

.erbar { height: 35px; flex: none; background: #e8e6e3; border-top: 1px solid #b4b3b0; display: flex; align-items: center; padding-bottom: 2px; }
.erbar .tsep { height: 29px; }
.zoombox { width: 196px; height: 32px; flex: none; border: 1px solid #d0cecb; border-radius: 6px; padding: 2px 5px; display: flex; }
.zoomval { flex: 1; background: #cfcdca; color: #111; line-height: 26px; padding-left: 3px; border-right: 1px solid #b9b7b4; }
.zoomarrow { width: 18px; background: #cfcdca; display: flex; align-items: center; justify-content: center; }

.status { flex: 1; display: flex; align-items: center; border-bottom: 2px solid #e6e5e3; background: #f5f4f2; padding-bottom: 2px; }
.st-msg { margin-left: 3px; width: 1433px; flex: none; white-space: nowrap; }
.st-cell { border-left: 1px solid #d6d4d1; height: 27px; line-height: 26px; padding-left: 6px; }
.st-art { width: 40px; }
.st-loc { width: 52px; }
```
